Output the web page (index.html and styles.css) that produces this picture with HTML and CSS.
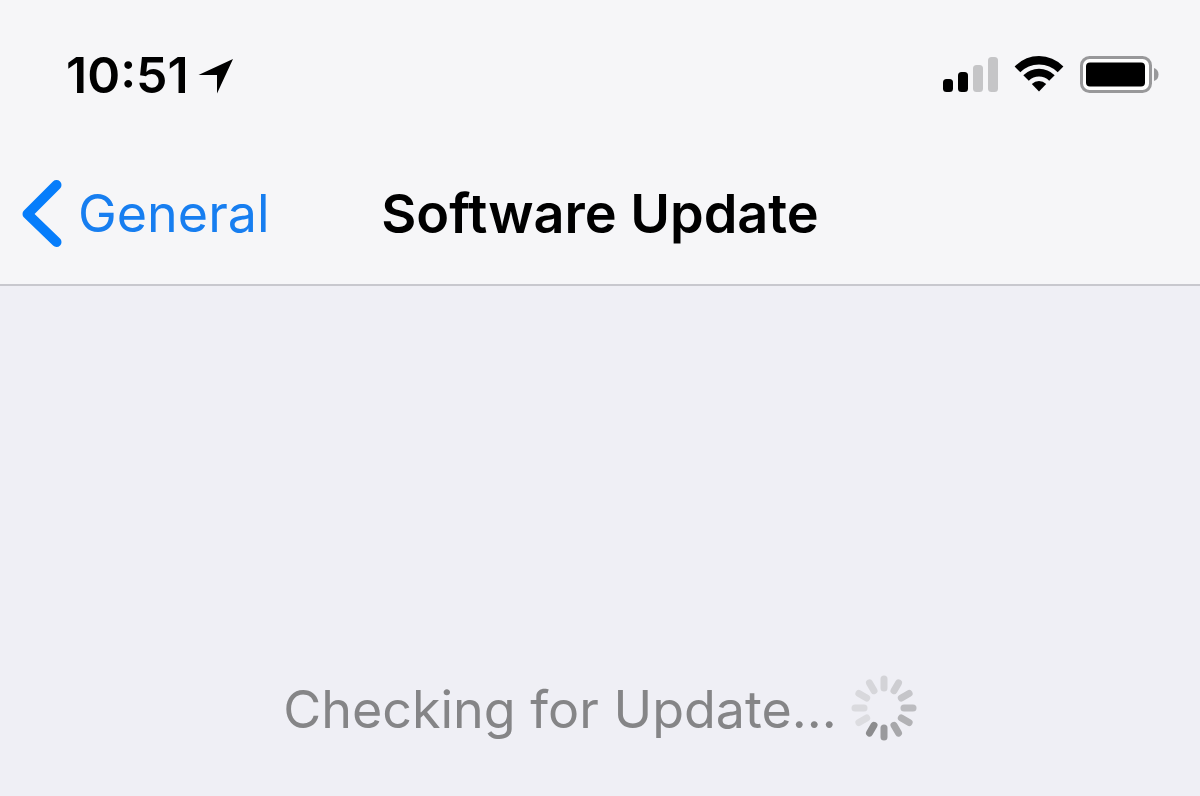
FILE: index.html
```html
<!DOCTYPE html>
<html lang="en">
<head>
    <meta charset="UTF-8">
    <meta name="viewport" content="width=device-width, initial-scale=1.0">
    <title>Software Update</title>
    <link rel="stylesheet" href="styles.css">
</head>
<body>
    <header class="header">
        <div class="status-bar">
            <div class="status-left">
                <span class="time">10:51</span>
                <svg class="location" width="36" height="36" viewBox="0 0 36 36" aria-hidden="true">
                    <path d="M34 2L18 36.500V18H-.5z"/>
                </svg>
            </div>
            <div class="status-right">
                <svg width="56" height="36" viewBox="0 0 56 36" aria-label="Signal">
                    <rect x="1" y="22" width="10" height="13" rx="3.500"/>
                    <rect x="16" y="15" width="10" height="20" rx="3.500"/>
                    <rect x="31" y="8" width="10" height="27" rx="3.500" fill="#c5c5c7"/>
                    <rect x="46" y="0" width="10" height="35" rx="3.500" fill="#c5c5c7"/>
                </svg>
                <svg width="50" height="36" viewBox="0 0 50 36" aria-label="Wi-Fi">
                    <path d="M.6 9.500Q11 -1 25 -1T49.400 9.500L43.700 15.200Q36 7.400 25 7.400T6.300 15.200z"/>
                    <path d="M9.300 18.200Q16 11.700 25 11.700T40.700 18.200L35.200 23.700Q30.800 19.500 25 19.500T14.800 23.700z"/>
                    <path d="M17.800 27Q21 24 25 24T32.200 27L25 34.500z"/>
                </svg>
                <svg width="80" height="38" viewBox="0 0 80 38" aria-label="Battery">
                    <rect x="1.500" y="1.500" width="69" height="34" rx="8" fill="#fff" stroke="#98989a" stroke-width="3"/>
                    <rect x="6" y="6.500" width="59" height="24" rx="4"/>
                    <path d="M74 12Q78.500 13.500 78.500 18.500T74 25z" fill="#98989a"/>
                </svg>
            </div>
        </div>
        <nav class="nav-bar">
            <a class="back" href="#">
                <svg width="42" height="68" viewBox="0 0 42 68" aria-hidden="true">
                    <path d="M36.500 6L7.500 35L36.500 63" fill="none" stroke="#067dfb" stroke-width="10" stroke-linecap="round" stroke-linejoin="round"/>
                </svg>
                General
            </a>
            <h1 class="title">Software Update</h1>
        </nav>
    </header>
    <main class="content">
        <div class="checking" role="status">
            <span>Checking for Update...</span>
            <svg class="spinner" width="66" height="66" viewBox="-33 -33 66 66" stroke-width="7" stroke-linecap="round" aria-hidden="true">
                <path d="M0-20V-29" stroke="#d3d3d7"/>
                <path d="M0-20V-29" stroke="#cdcdd1" transform="rotate(30)"/>
                <path d="M0-20V-29" stroke="#c5c5c9" transform="rotate(60)"/>
                <path d="M0-20V-29" stroke="#bcbcc0" transform="rotate(90)"/>
                <path d="M0-20V-29" stroke="#b2b2b5" transform="rotate(120)"/>
                <path d="M0-20V-29" stroke="#a7a7aa" transform="rotate(150)"/>
                <path d="M0-20V-29" stroke="#9a9a9d" transform="rotate(180)"/>
                <path d="M0-20V-29" stroke="#8c8c8e" transform="rotate(210)"/>
                <path d="M0-20V-29" stroke="#dcdce0" transform="rotate(240)"/>
                <path d="M0-20V-29" stroke="#dadade" transform="rotate(270)"/>
                <path d="M0-20V-29" stroke="#d8d8dc" transform="rotate(300)"/>
                <path d="M0-20V-29" stroke="#d6d6da" transform="rotate(330)"/>
            </svg>
        </div>
    </main>
</body>
</html>
```
FILE: styles.css
```css
* {
    margin: 0;
    padding: 0;
    box-sizing: border-box;
}

body {
    font-family: Inter, 'Liberation Sans', sans-serif;
    background-color: #efeff5;
    color: #000;
}

svg {
    display: block;
    flex-shrink: 0;
    overflow: visible;
}

.header {
    background-color: #f6f6f8;
    border-bottom: 2px solid #c8c8ce;
}

.status-bar {
    display: flex;
    justify-content: space-between;
    align-items: center;
    height: 142px;
    padding: 8px 40px 0 66px;
}

.status-left {
    display: flex;
    align-items: center;
    gap: 10px;
}

.time {
    font-size: 50px;
    font-weight: 600;
}

.status-right {
    display: flex;
    align-items: center;
    gap: 16px;
}

.nav-bar {
    display: grid;
    grid-template-columns: 1fr auto 1fr;
    align-items: center;
    height: 142px;
    padding: 0 20px;
}

.back {
    display: flex;
    align-items: center;
    gap: 16px;
    color: #177ef0;
    font-size: 52px;
    text-decoration: none;
}

.title {
    font-size: 54px;
    font-weight: 600;
}

.content {
    padding: 384px 20px 40px;
}

.checking {
    display: flex;
    justify-content: center;
    align-items: center;
    gap: 14px;
    color: #858587;
    font-size: 52px;
    line-height: 80px;
}

.spinner {
    margin-bottom: 4px;
}
```
